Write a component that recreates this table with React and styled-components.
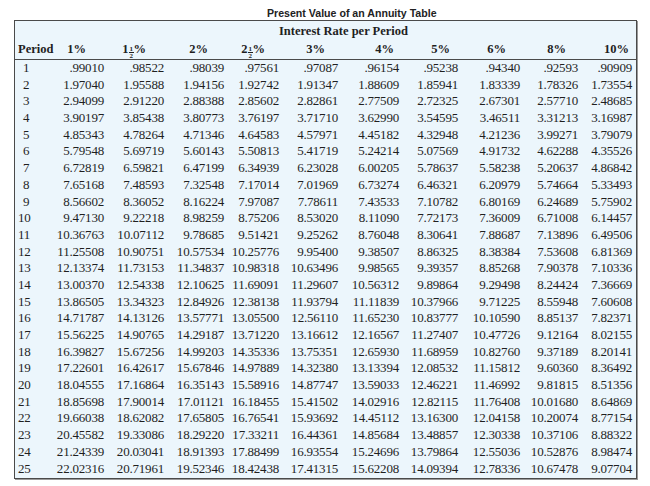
import React from 'react';
import styled, { createGlobalStyle } from 'styled-components';

const GlobalStyle = createGlobalStyle`
  body {
    margin: 0;
    background: #ffffff;
    font-family: "Liberation Serif", "Times New Roman", serif;
    color: #1f1f1f;
  }
`;

const Page = styled.div`
  width: 650px;
  height: 486px;
  padding: 6px 0 0 14px;
  box-sizing: border-box;
`;

const Title = styled.div`
  height: 14px;
  line-height: 14px;
  padding-left: 253px;
  font-family: "Liberation Sans", Arial, sans-serif;
  font-weight: bold;
  font-size: 10.6px;
  color: #222;
`;

const Box = styled.div`
  width: 623px;
  box-sizing: border-box;
  border: 1px solid #4a4a4a;
  box-shadow: 1px 1px 0 #9a9a9a;
  background: #ecf6fc;
`;

const Head = styled.div`
  border-bottom: 1px solid #4a4a4a;
  padding-top: 2px;
`;

const Caption = styled.div`
  height: 16px;
  line-height: 16px;
  padding-left: 264px;
  font-weight: bold;
  font-size: 12.5px;
`;

const Row = styled.div`
  display: grid;
  grid-template-columns: 33px 56px 60px 60px 55px 59px 61px 59px 62px 58px 54px;
  height: ${(p) => p.h || 16.7}px;
  line-height: ${(p) => p.h || 16.7}px;
  font-size: 13px;
  letter-spacing: -0.2px;
  white-space: nowrap;
`;

const HeadRow = styled(Row)`
  font-weight: bold;
  font-size: 12.5px;
  letter-spacing: 0;
`;

const PeriodCell = styled.div`
  padding-left: ${(p) => (p.wide ? 3 : 8)}px;
`;

const Num = styled.div`
  text-align: right;
`;

const HeadCell = styled.div`
  text-align: right;
  padding-right: ${(p) => p.pr}px;
`;

const Body = styled.div`
  padding-bottom: 1px;
`;

const Frac = styled.span`
  display: inline-flex;
  flex-direction: column;
  align-items: center;
  font-size: 7px;
  line-height: 6px;
  vertical-align: 2px;
  margin-left: 0.5px;
  & > span:first-child {
    border-bottom: 0.8px solid #1f1f1f;
    padding: 0 0.5px;
  }
`;

const rates = [
  { whole: '1', half: false, r: 0.01, pr: 18 },
  { whole: '1', half: true, r: 0.015, pr: 18 },
  { whole: '2', half: false, r: 0.02, pr: 16 },
  { whole: '2', half: true, r: 0.025, pr: 14 },
  { whole: '3', half: false, r: 0.03, pr: 13 },
  { whole: '4', half: false, r: 0.04, pr: 5 },
  { whole: '5', half: false, r: 0.05, pr: 8 },
  { whole: '6', half: false, r: 0.06, pr: 14 },
  { whole: '8', half: false, r: 0.08, pr: 12 },
  { whole: '10', half: false, r: 0.1, pr: 3 },
];

// present value of an ordinary annuity of 1 per period
const pv = (r, n) => {
  const v = (1 - Math.pow(1 + r, -n)) / r;
  const s = v.toFixed(5);
  return s.startsWith('0.') ? s.slice(1) : s;
};

const periods = Array.from({ length: 25 }, (_, i) => i + 1);

const App = () => (
  <Page>
    <GlobalStyle />
    <Title>Present Value of an Annuity Table</Title>
    <Box>
      <Head>
        <Caption>Interest Rate per Period</Caption>
        <HeadRow h={20}>
          <PeriodCell wide>Period</PeriodCell>
          {rates.map((rate, i) => (
            <HeadCell key={i} pr={rate.pr}>
              {rate.whole}
              {rate.half && (
                <Frac>
                  <span>1</span>
                  <span>2</span>
                </Frac>
              )}
              %
            </HeadCell>
          ))}
        </HeadRow>
      </Head>
      <Body>
        {periods.map((n) => (
          <Row key={n}>
            <PeriodCell wide={n >= 10}>{n}</PeriodCell>
            {rates.map((rate, i) => (
              <Num key={i}>{pv(rate.r, n)}</Num>
            ))}
          </Row>
        ))}
      </Body>
    </Box>
  </Page>
);

export default App;
